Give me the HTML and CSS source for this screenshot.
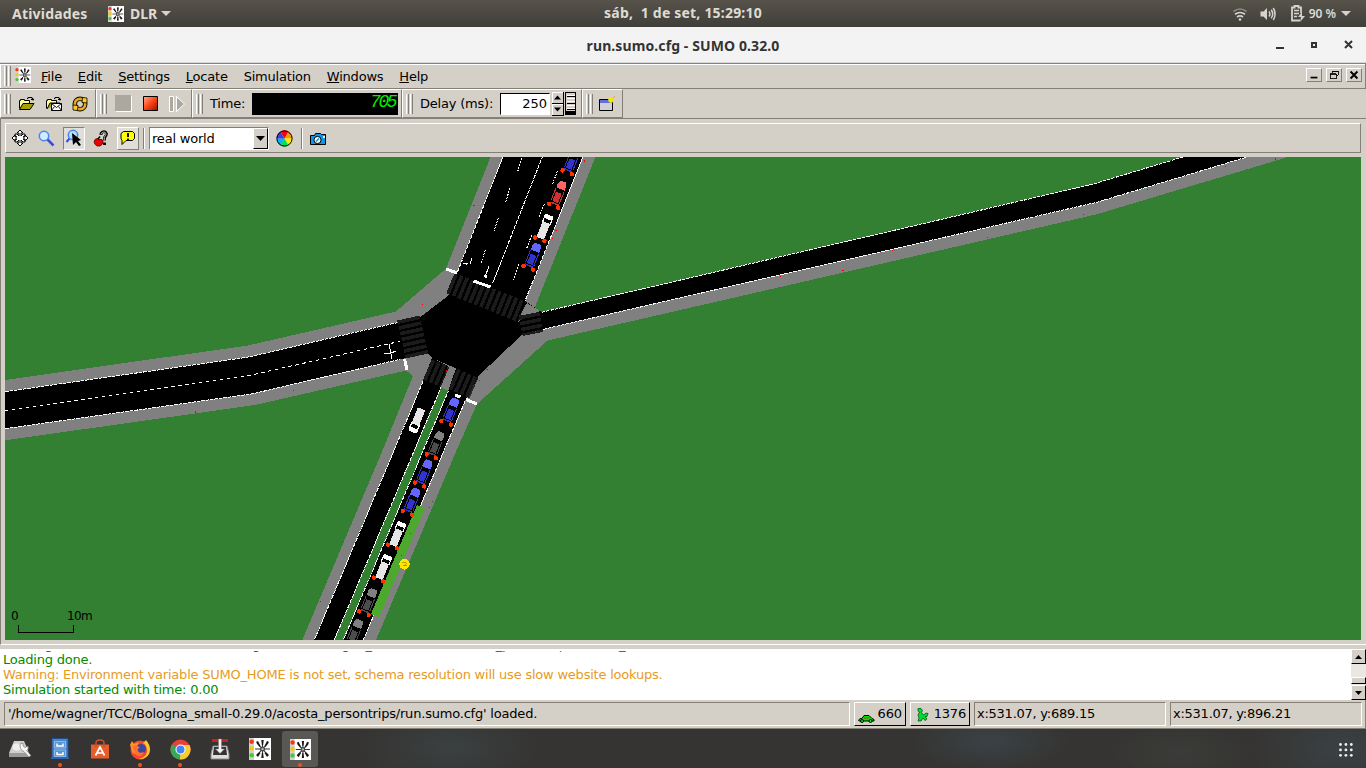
FILE: index.html
```html
<!DOCTYPE html>
<html lang="pt-BR">
<head>
<meta charset="utf-8">
<title>run.sumo.cfg - SUMO 0.32.0</title>
<link rel="stylesheet" href="styles.css">
</head>
<body>
<svg class="defs" width="0" height="0">
  <defs>
    <symbol id="sumo" viewBox="0 0 22 22">
      <rect width="22" height="22" fill="#fff"/><path d="M0 0h5v22H0z" fill="#d2d2cd"/>
      <circle cx="2.700" cy="3.700" r="2.300" fill="#ee3b20"/><circle cx="2.700" cy="10.500" r="2.300" fill="#f0c81a"/><circle cx="2.700" cy="17.300" r="2.300" fill="#4dc43a"/>
      <path d="M13.500 2v18M6 11h15M8 5l11 12M19 5L8 17" stroke="#333" stroke-width="1.100"/>
      <path d="M12.300 2h2.400l-.6 5h-1.200zM12.300 20h2.400l-.6-5h-1.200zM7 4l2-1 2.500 5-1 1zM20 4l-2-1-2.500 5 1 1zM7 17l2 2 2.500-4-1-1zM20 17l-2 2-2.500-4 1-1z" fill="#181818"/>
      <circle cx="13.500" cy="11" r="2.500" fill="#444"/><circle cx="13.500" cy="11" r="1.200" fill="#bbb"/>
    </symbol>
    <symbol id="folder" viewBox="0 0 17 15">
      <path d="M1.500 12.500v-8h1v-1h4v1h5v3" fill="#ffff9c" stroke="#000"/>
      <path d="M1.500 13.500l3.500-6h11l-4 6z" fill="#a5a200" stroke="#000"/>
      <path d="M9 2.500h1v-1h4v1h1v2m-2-1h3" fill="none" stroke="#000"/>
    </symbol>
    <symbol id="car" viewBox="-8 -28 16 32" overflow="visible">
      <path d="M-3.500-26h7l1 4v19l-1 3h-7l-1-3v-19z" fill="#000"/>
      <path d="M-3-26h6l1.500 3.500v4.500h-9v-4.500z" class="hood"/>
      <path d="M-3-14h6V-4h-6zM-5-17h1v13h-1zM4-17h1v13H4zM-4.500-3h9v1.500h-9z" fill="currentColor"/>
    </symbol>
    <symbol id="van" viewBox="-8 -28 16 32" overflow="visible">
      <path d="M-3.500-26h7l1.200 2v7h-9.400v-7z" fill="#fff"/>
      <path d="M-3.500-21.500h7v4h-7z" fill="#000"/>
      <path d="M-4-18h8v17h-8z" fill="#e6e6e6"/>
    </symbol>
    <g id="brakes" fill="#ff3200"><circle cx="-5" cy="0" r="2.200"/><circle cx="5" cy="0" r="2.200"/></g>
  </defs>
</svg>

<header class="topbar">
  <div class="top-left"><span class="act">Atividades</span><svg width="16" height="16"><use href="#sumo"/></svg><span class="app">DLR</span><i class="tri"></i></div>
  <div class="clock">sáb,&nbsp; 1 de set, 15:29:10</div>
  <div class="tray">
    <svg width="16" height="16" viewBox="0 0 16 16" fill="none" stroke="#d5d3ce" stroke-width="1.700"><path d="M1.500 5.500q6.500-5 13 0" opacity=".45"/><path d="M3 8.300q5-3.600 10 0M5 11q3-2.200 6 0"/><circle cx="8" cy="13.500" r="1.300" fill="#d5d3ce" stroke="none"/></svg>
    <svg class="vol" width="16" height="16" viewBox="0 0 16 16" fill="none" stroke="#d5d3ce" stroke-width="1.500"><path d="M.5 5.500h3L7 2v12l-3.500-3.500h-3z" fill="#d5d3ce" stroke="none"/><path d="M9 5.500q1.800 2.500 0 5M11.200 3.800q3 4.200 0 8.400M13.300 2q3.500 6 0 12"/></svg>
    <svg class="bat" width="16" height="17" viewBox="0 0 16 17" fill="none" stroke="#d5d3ce"><path d="M10 15.500H2v-13h2.500v-1.500h4v1.500H11V8" stroke-width="1.800"/><path d="M4 5.500h5M4 8.500h5M4 11.500h3" stroke-width="1.600"/><path d="M12 7l-4 5h3l-1 5 5-6h-3z" fill="#d5d3ce" stroke="none"/></svg>
    <span class="pct">90 %</span><i class="tri"></i>
  </div>
</header>

<div class="titlebar">
  <span class="title">run.sumo.cfg - SUMO 0.32.0</span>
  <svg class="winbtns" width="80" height="12" viewBox="0 0 80 12" fill="none" stroke="#2e3436" stroke-width="2"><path d="M0 9h8M36 4h4v4h-4zM69 2l7 7M76 2l-7 7"/></svg>
</div>

<nav class="menubar">
  <i class="grip"></i>
  <svg class="mico" width="16" height="16"><use href="#sumo"/></svg>
  <span class="m"><u>F</u>ile</span><span class="m"><u>E</u>dit</span><span class="m"><u>S</u>ettings</span><span class="m"><u>L</u>ocate</span><span class="m">Simulation</span><span class="m"><u>W</u>indows</span><span class="m"><u>H</u>elp</span>
  <div class="mdi">
    <svg width="16" height="14" viewBox="0 0 16 14"><path d="M4 10h8" stroke="#000" stroke-width="2"/></svg>
    <svg width="16" height="14" viewBox="0 0 16 14" fill="none" stroke="#000" shape-rendering="crispEdges"><path d="M6 5V2.500h7v5h-2M3.500 6v5.500h7v-6h-7M3 6.500h8M6 3h7"/></svg>
    <svg width="16" height="14" viewBox="0 0 16 14"><path d="M4 3l8 8M12 3l-8 8" stroke="#000" stroke-width="2.300"/></svg>
  </div>
</nav>

<div class="toolbar">
  <section class="tg g1"><i class="grip"></i>
    <svg width="17" height="15"><use href="#folder"/></svg>
    <svg width="17" height="15" viewBox="0 0 17 15"><path d="M1.500 12.500v-8h1v-1h4v1h5v3" fill="#ffff9c" stroke="#000"/><path d="M9 2.500h1v-1h4v1h1v2m-2-1h3" fill="none" stroke="#000"/><path d="M2 13l3-6h10" fill="#a5a200" stroke="#000"/><path d="M6.500 7.500h10v7h-10z" fill="#fff" stroke="#000"/><path d="M6.500 7.500l5 4 5-4M6.500 14.500l3-4M16.500 14.500l-3-4" fill="none" stroke="#000" stroke-width=".9"/></svg>
    <svg width="16" height="16" viewBox="0 0 16 16" fill="none"><circle cx="8" cy="8" r="5.200" stroke="#000" stroke-width="4.600"/><circle cx="8" cy="8" r="5.200" stroke="#e9aa13" stroke-width="2.700"/><path d="M10.500 1.500l4.500.5v5l-5-.5zM5.500 14.500L1 14V9l5 .5z" fill="#ffc92b" stroke="#000" stroke-width=".8"/></svg>
  </section>
  <section class="tg g2"><i class="grip"></i>
    <svg width="17" height="17"><path d="M1 16.500h15.500V1" fill="none" stroke="#fff"/><path d="M0 0h16v16H0z" fill="#aca8a0"/></svg>
    <svg width="15" height="15"><defs><linearGradient id="rg" x2="1" y2="1"><stop stop-color="#ffb09a"/><stop offset=".5" stop-color="#ff4212"/><stop offset="1" stop-color="#8a1600"/></linearGradient></defs><path d="M.5.500h14v14H.5z" fill="url(#rg)" stroke="#000"/></svg>
    <svg width="16" height="16"><path d="M.5.500h4v15h-4zM7.500.500v15l8-7.500z" fill="#aca8a0" stroke="#fff"/></svg>
  </section>
  <section class="tg g3"><i class="grip"></i><span class="tlabel">Time:</span><div class="lcd">705</div></section>
  <section class="tg g4"><i class="grip"></i><span class="dlabel">Delay (ms):</span><div class="num">250</div>
    <svg width="12" height="24" viewBox="0 0 12 24"><path d="M0 0h12v12H0zM0 12h12v12H0z" fill="#000"/><path d="M0 0h11v11H0zM0 12h11v11H0z" fill="#fff"/><path d="M1 1h10v10H1zM1 13h10v10H1z" fill="#d4d0c8"/><path d="M2 7.500L5.500 3.500 9 7.500zM2 15.500h7l-3.500 4z"/></svg>
    <svg class="wheel" width="12" height="23" viewBox="0 0 12 23" fill="none" shape-rendering="crispEdges"><path d="M.5.500h10v22H.5z" fill="#d4d0c8" stroke="#000"/><path d="M2 3.500h8M2 6.500h8M2 9.500h8M2 13.500h8M2 16.500h8" stroke="#fff"/><path d="M2 4.500h8M2 11.500h8M2 17.500h8" stroke="#000"/><path d="M1 20.500h9" stroke="#000" stroke-width="3"/></svg>
  </section>
  <section class="tg g5"><i class="grip"></i>
    <svg width="17" height="16" viewBox="0 0 17 16"><path d="M.5 3.500h13v11H.5z" fill="#d0d1d8" stroke="#000"/><path d="M1 4h12v3H1z" fill="#6370d8"/><path d="M12 1v6M9 4h6M10 2l4 4M14 2l-4 4" stroke="#f4e600" stroke-width="1.500"/><path d="M15.500.500l-1 1" stroke="#f63"/></svg>
  </section>
</div>

<main class="child">
  <div class="viewbar">
    <svg width="18" height="18" viewBox="0 0 18 18" fill="#fff" stroke="#000"><path d="M9 1l3 3h-2v3l2-2h2v2l-2 1h2V6l3 3-3 3v-2h-2l2 1v2h-2l-2-2v3h2l-3 3-3-3h2v-3l-2 2H4v-2l2-1H4v2L1 9l3-3v2h2L4 7V5h2l2 2V4H6z"/></svg>
    <svg class="v2" width="17" height="17" viewBox="0 0 17 17"><path d="M9 9l6.500 6.500" stroke="#3c4ce0" stroke-width="2.500"/><circle cx="6" cy="6" r="4.700" fill="#cdeeff" stroke="#4b84e8" stroke-width="1.500"/></svg>
    <div class="tog"><svg width="18" height="18" viewBox="0 0 18 18"><path d="M5 9l-3.500 4" stroke="#3c4ce0" stroke-width="2"/><circle cx="8" cy="6" r="4.700" fill="#b9ddf5" stroke="#4b84e8" stroke-width="1.500"/><path d="M7 4l9 7-3 1 3 4-2 1-3-4-3 3z"/></svg></div>
    <svg class="v4" width="16" height="17" viewBox="0 0 16 17"><path d="M2 9.500q2-2 4 0 4-1 4 2t-3 4.500H4Q-.5 13 2 9.500z" fill="#e80000" stroke="#600" stroke-width=".8"/><path d="M5 9l2-2.500" stroke="#000" stroke-width="1.500"/><path d="M8 5V3.500q1-1.800 2.800-1.800T13.500 4q0 1.500-2 3.500v3m0 2v2.500" fill="none" stroke="#000" stroke-width="2.800"/><path d="M8 4.500V4q1-2 2.800-2T13 4q0 1.500-1.700 3.200v3" fill="none" stroke="#fff" stroke-width=".7"/></svg>
    <div class="tog say"><svg width="16" height="16" viewBox="0 0 16 16"><path d="M3.500 1.500h9l2 2v5l-2 2H6l-4 4v-4l-1-2v-5z" fill="#ffff00" stroke="#000"/><path d="M8 3v4M8 8.500v1.500" stroke="#000" stroke-width="1.800"/></svg></div>
    <i class="vsep"></i>
    <div class="combo"><span>real world</span><b><svg width="9" height="5"><path d="M0 0h9L4.500 5z"/></svg></b></div>
    <svg class="wheelc" width="17" height="17" viewBox="-8.500 -8.500 17 17"><path d="M0 0L-4-7A8 8 0 0 1 4-7z" fill="#f00"/><path d="M0 0L4-7A8 8 0 0 1 8 0z" fill="#ff9500"/><path d="M0 0H8A8 8 0 0 1 4 7z" fill="#f6ee00"/><path d="M0 0L4 7A8 8 0 0 1-4 7z" fill="#00e050"/><path d="M0 0L-4 7A8 8 0 0 1-8 0z" fill="#00b8f0"/><path d="M0 0H-8A8 8 0 0 1-4-7z" fill="#4040e8"/><circle r="7.600" fill="none" stroke="#000"/></svg>
    <i class="vsep s2"></i>
    <svg class="cam" width="17" height="14" viewBox="0 0 17 14"><path d="M.5 3.500h4l1-2h5l1 1h4v10H.5z" fill="#1594e8" stroke="#000"/><circle cx="7.500" cy="8" r="3.600" fill="#e8f8ff" stroke="#000"/><path d="M6 9.500l3-3" stroke="#1594e8" stroke-width="1.500"/><path d="M13 4h2v2h-2z" fill="#bff"/></svg>
  </div>
  <svg class="map" width="1356" height="483" viewBox="5 157 1356 483" shape-rendering="crispEdges">
    <rect x="5" y="157" width="1356" height="483" fill="#338033"/>
    <g fill="#808080">
      <path d="M490.500 157H595.500L535 307 540 313 547 341 477 404 456.700 450 376 640H302.300L382.700 450 413 376 406 370.500 255 405 5 440.300V380L248 345.500 396 311.500 446 268.500z"/>
      <path d="M525 330L1096 203 1245 157H1288L1096.700 214.300 546.700 340.700z"/>
    </g>
    <g fill="#000">
      <path d="M503 157H583L525 301 541.700 312.300 1093.300 184 1183 157H1247L1096.700 202.300 543.300 329.300 521.700 335 477 377.300 432 358 428 353 400 359.300 253 393.700 5 428.700V391.700L247 357.300 397 322.700 420.700 316.700 448 296 457.300 272.300z"/>
      <path d="M432 358L448 366 441 387 334.300 640H314.300L423.300 380.700z"/>
      <path d="M456 368L478 377 465.300 400.700 444 450 363.300 640H343.300L423.300 450 448.300 391z"/>
    </g>
    <path d="M441 387.300L448.300 391 343.300 640H334.300z" fill="#338033"/>
    <path d="M518 322L540 311 527 303 519 316z" fill="#808080"/><path d="M519 321l20-9 2 12-20 5z"/>
    <g fill="none" stroke="#fff">
      <path d="M541.700 312.300L1093.300 184 1183 157M543.300 329.300L1096.700 202.300 1247 157M5 391.700L247 357.300 397 322.700M5 428.700L253 393.700 400 359.300" stroke-dasharray="3.500 1"/>
      <path d="M503 157L457.300 272.300M583 157L525 301M423.300 380.700L314.300 640M441 387.300L334.300 640M448.300 391L343.300 640M465.300 400.700L363.300 640M542.300 157L492.700 283" stroke-dasharray="2.200 .5"/>
      <path d="M5 410.500L253 374.700 400 341.300" stroke-dasharray="3.500 3.500"/>
      <path d="M521.700 158l-4 13.600M510 188.300l-4.300 13.400M498.300 218.300l-5 15M485.300 250l-4.300 13.300M557.300 171l-5 14M544.300 204l-5 12.700M531.700 235l-5 13.300M518.700 264.300l-5 15.700" stroke-dasharray="2 1"/>
      <path d="M463 263.500h5m-2-1v2M472 258l-2 6M489 266l-4 11m-1-2l2 3 1-3M389 344l3 15M384 353h7M391 353l5-2"/>
    </g>
    <path d="M417 505L425 508 379.300 617.300 371 614z" fill="#4da82e"/>
    <g stroke="#000" stroke-opacity=".65">
      <path d="M450.500 283L522 312" stroke-width="22"/><path d="M408.500 318L417 356" stroke-width="23"/><path d="M427.500 369.500L445 377" stroke-width="22"/><path d="M453 379L474 388" stroke-width="22"/><path d="M529 314L533 334" stroke-width="21"/>
    </g>
    <g stroke="#1b1b1b" stroke-dasharray="3.600 2.300">
      <path d="M450.500 283L522 312" stroke-width="22"/><path d="M408.500 318L417 356" stroke-width="23"/><path d="M427.500 369.500L445 377" stroke-width="22"/><path d="M453 379L474 388" stroke-width="22"/><path d="M529 314L533 334" stroke-width="21"/>
    </g>
    <path d="M451 367L456 369 448 389 442 387z" fill="#808080"/>
    <path d="M446.300 269L457 273M473.500 281L490.500 287M404.500 359L407 370M455 395L460.500 397M466 399.500L477 404" stroke="#fff" stroke-width="3"/>
    <g class="cars">
      <g class="blue" transform="translate(567.200 172.300) rotate(22)"><use href="#car" x="-8" y="-28" width="16" height="32"/><use href="#brakes"/></g>
      <g class="red" transform="translate(553.700 205.700) rotate(22)"><use href="#car" x="-8" y="-28" width="16" height="32"/><use href="#brakes"/></g>
      <g transform="translate(539.800 239.300) rotate(22)"><use href="#van" x="-8" y="-28" width="16" height="32"/><use href="#brakes"/></g>
      <g class="blue" transform="translate(528.200 267.800) rotate(22)"><use href="#car" x="-8" y="-28" width="16" height="32"/><use href="#brakes"/></g>
      <g class="blue" transform="translate(446 422.700) rotate(22)"><use href="#car" x="-8" y="-28" width="16" height="32"/><use href="#brakes"/></g>
      <g class="gray" transform="translate(431.300 456.200) rotate(22)"><use href="#car" x="-8" y="-28" width="16" height="32"/><use href="#brakes"/></g>
      <g class="blue" transform="translate(419.500 484.500) rotate(22)"><use href="#car" x="-8" y="-28" width="16" height="32"/><use href="#brakes"/></g>
      <g class="blue" transform="translate(407.300 512.800) rotate(22)"><use href="#car" x="-8" y="-28" width="16" height="32"/><use href="#brakes"/></g>
      <g transform="translate(392.500 546.500) rotate(22)"><use href="#van" x="-8" y="-28" width="16" height="32"/><use href="#brakes"/></g>
      <g transform="translate(378.500 579.500) rotate(22)"><use href="#van" x="-8" y="-28" width="16" height="32"/><use href="#brakes"/></g>
      <g class="gray" transform="translate(364 613.300) rotate(22)"><use href="#car" x="-8" y="-28" width="16" height="32"/><use href="#brakes"/></g>
      <g class="gray" transform="translate(350 644) rotate(22)"><use href="#car" x="-8" y="-28" width="16" height="32"/></g>
      <g transform="translate(422 408) rotate(202)"><use href="#van" x="-8" y="-28" width="16" height="32"/></g>
    </g>
    <circle cx="404.500" cy="564.300" r="5.200" fill="#ffe600"/><path d="M402 562.500h4l-3 3h4" fill="none" stroke="#a08000" stroke-width=".7"/>
    <path d="M473 205.500h2M422 304.500h1M584.500 160v2M555 230.500h2M552 238.500h1M535 331.500h1M446.500 370v2M486 369.500h2M479 380.500h1M432 501.500h1M429 507.500h1M410 533.500h1M401 555.500h1M320 601.500h1M293 390.500h1M195.500 411v2M842 270.500h2M987 237.500h1M1083 214.500h1M1147 189.500h1M1225 166.500h1M1275.500 158v2M780 276.500h1M892 250.500h1" stroke="#f00"/>
    <path d="M18.500 625v7.500H73.500V625" fill="none" stroke="#000"/>
    <text x="11" y="620">0</text><text x="67" y="620">10m</text>
  </svg>
</main>

<div class="log">
  <div class="lines">
    <p class="past">Loading additional-files from '/home/wagner/TCC/Bologna_small-0.29.0/acosta_persontrips/acosta_detectors.add.xml'...</p>
    <p>Loading done.</p><p class="warn">Warning: Environment variable SUMO_HOME is not set, schema resolution will use slow website lookups.</p><p>Simulation started with time: 0.00</p>
  </div>
  <div class="scroll"><b class="sb"><svg width="7" height="4"><path d="M0 4h7L3.500 0z"/></svg></b><span></span><b class="thumb"></b><b class="sb"><svg width="7" height="4"><path d="M0 0h7L3.500 4z"/></svg></b></div>
</div>

<div class="status">
  <div class="sunk msg">'/home/wagner/TCC/Bologna_small-0.29.0/acosta_persontrips/run.sumo.cfg' loaded.</div>
  <div class="btn b1"><svg width="17" height="9" viewBox="0 0 17 9"><path d="M.5 6.500L2 4.500h2l2-3h5l3 3 2 1v1.500H1z" fill="#00e400" stroke="#000"/><path d="M6 4h5" stroke="#a33"/><circle cx="4" cy="7" r="1.500" fill="#0f0" stroke="#000"/><circle cx="12.500" cy="7" r="1.500" fill="#0f0" stroke="#000"/></svg>660</div>
  <div class="btn b2"><svg width="13" height="15" viewBox="0 0 13 15"><path d="M2 1.500h3l1.500 2-1 2 2 2.500L10 6l2 .5-1 3H9l2 2.500-2 1.500L7 11l-2 3H2l1-3-1-3 1.500-3L2 4z" fill="#00dc28" stroke="#052" stroke-width=".8"/></svg>1376</div>
  <div class="sunk xy">x:531.07, y:689.15</div>
  <div class="sunk xy">x:531.07, y:896.21</div>
</div>

<footer class="dock">
  <div class="di"><svg width="24" height="20" viewBox="0 0 24 20"><path d="M6 2h10l5 12H1z" fill="#cfcfcf"/><path d="M1 14h20v4H1z" fill="#9b9b9b"/><ellipse cx="9" cy="8" rx="4.500" ry="3.500" fill="#eee"/><path d="M12 5l3-1v3l2 1.500 3-1.500q1 4-1.500 4.500l4.500 5-2 1.500-5-5.500q-4-1-4-7.500z" fill="#fafafa" stroke="#777" stroke-width=".7"/></svg></div>
  <div class="di run"><svg width="20" height="22" viewBox="0 0 20 22"><path d="M2 .500h16v20H2z" fill="#4a87cc" stroke="#224f8c"/><path d="M1 19h18v2H1z" fill="#2c65ac"/><path d="M4.500 3.500h11v6.500h-11zM4.500 12h11v6.500h-11z" fill="#5a94d4" stroke="#9cc4ee" stroke-width=".8"/><path d="M7 5.500v2.500h6V5.500M7 14v2.500h6V14" fill="none" stroke="#fff" stroke-width="1.500"/></svg></div>
  <div class="di"><svg width="20" height="20" viewBox="0 0 20 20"><path d="M1 5.500h18v14H1z" fill="#e95d2a"/><path d="M6 8V4q0-3 4-3t4 3v4" fill="none" stroke="#c8512b" stroke-width="1.500"/><path d="M5.500 16.500L10 8l4.500 8.500M7.500 14h5" fill="none" stroke="#fff" stroke-width="1.700"/></svg></div>
  <div class="di run"><svg width="22" height="22" viewBox="0 0 22 22"><circle cx="11" cy="12" r="9.500" fill="#f9452c"/><path d="M17 2q6 7 3 14-4 6-10 5 8-2 8-8T14 5z" fill="#ffc52e"/><path d="M1 7l2-4 2 3 5-2-2 4q-3 5 3 8-7 1-8-3z" fill="#ff932e"/><circle cx="12" cy="11" r="5" fill="#38499f"/><path d="M3 8q5-2 8 2-3 0-2 3t6 1q-2 6-8 3z" fill="#ff702c"/></svg></div>
  <div class="di run"><svg width="21" height="21" viewBox="0 0 21 21"><circle cx="10.500" cy="10.500" r="10" fill="#e5423a"/><path d="M10.500 10.500L1.800 5.500A10 10 0 0 0 10 20.500l4.500-8z" fill="#3aa757"/><path d="M10.500 10.500V6h9A10 10 0 0 1 10 20.500z" fill="#fbcb32"/><circle cx="10.500" cy="10.500" r="5" fill="#fff"/><circle cx="10.500" cy="10.500" r="4" fill="#4285f4"/></svg></div>
  <div class="di"><svg width="20" height="22" viewBox="0 0 20 22"><path d="M3 8h14l2 8v5H1v-5z" fill="#ddd" stroke="#888"/><path d="M4 9h12l1 8H3z" fill="#333"/><path d="M2 1h16v3H2z" fill="#c92020"/><path d="M8.500 1h3v10h3L10 15.500 5.500 11h3z" fill="#f4f4f4" stroke="#777" stroke-width=".5"/></svg></div>
  <div class="di"><svg width="22" height="22"><use href="#sumo"/></svg></div>
  <div class="di run active"><svg width="21" height="21"><use href="#sumo"/></svg></div>
  <svg class="apps" width="14" height="14" fill="#eee"><g id="r"><circle cx="1.500" cy="1.500" r="1.400"/><circle cx="6.900" cy="1.500" r="1.400"/><circle cx="12.300" cy="1.500" r="1.400"/></g><use href="#r" y="5.400"/><use href="#r" y="10.800"/></svg>
</footer>
</body>
</html>
```
FILE: styles.css
```css
* { box-sizing: border-box; }
body { margin: 0; width: 1366px; height: 768px; overflow: hidden; background: #d4d0c8; font: 13px "DejaVu Sans", sans-serif; letter-spacing: -.2px; color: #000; display: flex; flex-direction: column; }
svg { display: block; flex: none; }
.defs { position: absolute; }
.topbar { height: 27px; flex: none; background: linear-gradient(#57534b, #3f3e39); color: #dfdbd2; font: 700 14px/20px "Noto Sans", sans-serif; letter-spacing: 0; display: grid; grid-template-columns: 1fr auto 1fr; align-items: center; }
.top-left { display: flex; align-items: center; padding-left: 12px; }
.act { width: 96px; letter-spacing: .2px; }
.app { margin: 0 4px 0 6px; }
.tri { border: 5px solid transparent; border-top-color: #d5d3ce; border-bottom: 0; }
.clock { letter-spacing: .2px; margin-top: -1px; }
.tray { display: flex; align-items: center; justify-content: flex-end; padding-right: 15px; }
.vol { margin-left: 12px; }
.bat { margin-left: 14px; margin-top: -1px; }
.pct { margin: 0 5px 0 3px; font-weight: 600; font-size: 12px; }
.titlebar { height: 36px; flex: none; background: #f3f3f3; border-bottom: 1px solid #d8d8d8; display: grid; grid-template-columns: 1fr auto 1fr; align-items: center; font: 700 14px/20px "Noto Sans", sans-serif; letter-spacing: .1px; color: #333; }
.title { grid-column: 2; margin-top: 2px; }
.winbtns { justify-self: end; margin: 1px 10px 0 0; }
.menubar { height: 26px; flex: none; border-top: 1px solid #848078; border-bottom: 1px solid #848078; border-right: 1px solid #848078; box-shadow: inset 0 1px #fff, inset 1px 0 #fff; display: flex; align-items: center; padding-left: 4px; }
.grip { width: 7px; height: 20px; flex: none; background: linear-gradient(90deg, #fff 1px, #d4d0c8 1px 2px, #848078 2px 3px, #d4d0c8 3px 4px, #fff 4px 5px, #d4d0c8 5px 6px, #848078 6px); }
.mico { margin: -3px 10px 0 4px; }
.m { line-height: 20px; margin: 1px 15.900px 0 0; }
.mdi { margin: -3px 3px 0 auto; display: flex; gap: 4px; }
.mdi svg { border: 1px solid; border-color: #fff #848078 #848078 #fff; }
.toolbar { height: 30px; flex: none; display: flex; border-bottom: 1px solid #848078; }
.tg { flex: none; white-space: nowrap; height: 29px; border: 1px solid; border-color: #fff #848078 #848078 #fff; display: flex; align-items: center; padding-left: 3px; }
.g1 { width: 96px; gap: 10px; }
.g1 .grip { margin-right: -3px; }
.g2 .grip { margin-right: -3px; }
.g2 { width: 96px; gap: 11px; }
.g3 { width: 210px; }
.tlabel { width: 42px; margin: 0 0 0 7px; }
.lcd { width: 146px; height: 22px; background: #000; color: #00f000; font: italic 18px/19px "Liberation Mono", monospace; letter-spacing: -2.500px; text-align: right; padding-right: 3px; overflow: hidden; }
.g4 { width: 180px; }
.dlabel { width: 80px; margin: 0 0 0 7px; }
.num { width: 50px; height: 22px; background: #fff; border: 1px solid; border-color: #000 #fff #fff #000; line-height: 20px; text-align: right; padding-right: 2px; margin-right: 2px; letter-spacing: 0; }
.wheel { margin-left: 1px; }
.g5 { width: 41px; gap: 6px; }
.child { height: 526px; flex: none; border-left: 1px solid #848078; border-bottom: 1px solid #fff; padding: 4px 5px 0 4px; }
.viewbar { height: 30px; margin-bottom: 4px; border: 1px solid; border-color: #fff #848078 #848078 #fff; display: flex; align-items: center; padding-left: 5px; }
.v2 { margin: 0 8px 0 9px; }
.tog { width: 22px; height: 23px; border: 1px solid; border-color: #848078 #fff #fff #848078; background: #e0ded8; display: grid; place-items: center; }
.tog.say { border-color: #fff #848078 #848078 #fff; }
.v4 { margin: 0 8px; }
.vsep { width: 2px; height: 21px; background: linear-gradient(90deg, #848078 50%, #fff 50%); margin: 0 4px 0 4px; }
.combo { width: 120px; height: 23px; background: #fff; border: 1px solid; border-color: #848078 #fff #fff #848078; display: flex; justify-content: space-between; line-height: 21px; padding-left: 2px; }
.combo b { width: 15px; background: #d4d0c8; border: 1px solid; border-color: #fff #000 #000 #fff; display: grid; place-items: center; }
.wheelc { margin-left: 7px; }
.s2 { margin: 0 7px 0 8px; }
.cam { margin-top: 1px; }
.map text { font: 12px "DejaVu Sans", sans-serif; letter-spacing: -.6px; }
.cars .blue { color: #3232cc; --hood: #6464ff; }
.cars .red { color: #cc3232; --hood: #ff6464; }
.cars .gray { color: #4c4c4c; --hood: #808080; }
.hood { fill: var(--hood); }
.log { height: 51px; flex: none; margin-top: 4px; background: #fff; display: flex; color: #008c00; line-height: 15px; }
.lines { flex: 1; padding-left: 3px; margin-top: 2px; white-space: nowrap; overflow: hidden; }
.log p { margin: 0; letter-spacing: -.215px; }
.log .past { margin-top: -14px; }
.log .warn { color: #e69b1e; }
.scroll { width: 15px; display: flex; flex-direction: column; background: #e9e7e3; }
.scroll b { border: 1px solid; border-color: #fff #000 #000 #fff; background: #d4d0c8; display: grid; place-items: center; }
.scroll .sb { height: 15px; }
.scroll span { flex: 1; }
.scroll .thumb { height: 7px; margin-bottom: 1px; }
.status { height: 29px; flex: none; display: flex; padding: 2px 3px 3px 4px; border-bottom: 1px solid #848078; line-height: 22px; border-right: 1px solid #848078; }
.sunk { height: 24px; border: 1px solid; border-color: #848078 #fff #fff #848078; padding-left: 3px; }
.msg { width: 846px; margin-right: 4px; }
.btn { height: 24px; border: 1px solid; border-color: #fff #000 #000 #fff; display: flex; align-items: center; justify-content: space-between; padding: 0 3px; margin-right: 4px; letter-spacing: -.1px; }
.b1 { width: 52px; }
.b1 svg { margin-top: 8px; }
.b2 { width: 60px; padding-left: 5px; letter-spacing: -.2px; }
.xy { width: 192px; margin-right: 4px; padding-left: 2px; letter-spacing: -.25px; }
.xy:last-child { margin: 0; }
.dock { flex: 1; display: flex; align-items: center; padding: 0 13px 0 0; background: radial-gradient(ellipse 90px 40px at 450px 18px, #3b4041, transparent), radial-gradient(ellipse 80px 30px at 990px 12px, #3b4246, transparent), radial-gradient(ellipse 70px 30px at 1180px 24px, #3b3c39, transparent), radial-gradient(ellipse 90px 50px at 1340px 20px, #3b4144, transparent), #353432; }
.di { width: 36px; height: 36px; margin: 1px 2px 0; display: grid; place-items: center; border-radius: 3px; position: relative; }
.run::after { content: ""; position: absolute; width: 4px; height: 4px; border-radius: 50%; background: #e95420; left: 16px; bottom: 0; }
.active { background: #595855; }
.apps { margin-left: auto; margin-top: 2px; }
```
